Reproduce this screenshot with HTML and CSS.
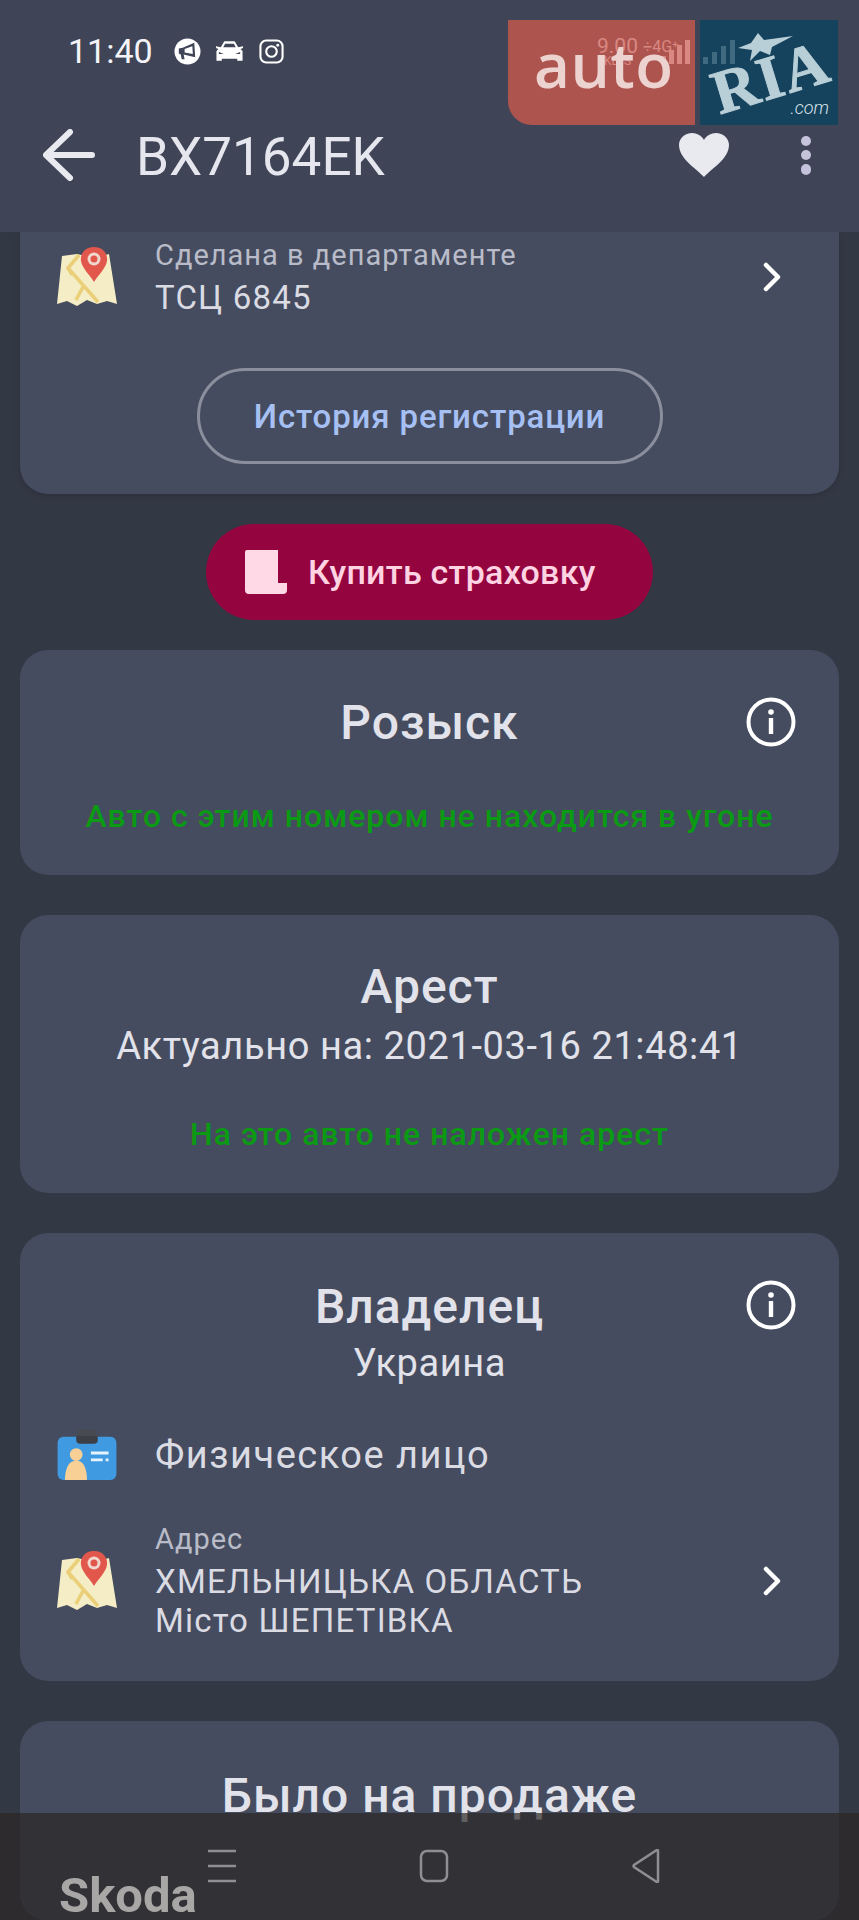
FILE: index.html
```html
<!DOCTYPE html>
<html lang="ru">
<head>
<meta charset="utf-8">
<title>BX7164EK</title>
<link rel="stylesheet" href="styles.css">
</head>
<body>
<svg class="defs" width="0" height="0" aria-hidden="true">
  <defs>
    <symbol id="map" viewBox="0 0 60 60">
      <path d="M5 9 L20 7 L38 11 L52 7 L60 57 L50 54 L40 57 L30 53 L20 59 L10 54 L0 57 Z" fill="#f5edc5"/>
      <path d="M22 8 L11 21 L41 55 M11 21 L15 28 M27 38 L19 53" fill="none" stroke="#ebcf78" stroke-width="3.500"/>
      <path d="M37 0 C27 0 23 8 24 14 C25 21 32 27 37 35 C42 27 49 21 50 14 C51 8 47 0 37 0 Z" fill="#e2574c"/>
      <circle cx="37" cy="12" r="6.500" fill="#f0d8cf"/>
      <circle cx="37" cy="12" r="3.500" fill="#e2574c"/>
    </symbol>
    <symbol id="chevron" viewBox="0 0 22 30">
      <path d="M5 3 L17 15 L5 27" fill="none" stroke="#fff" stroke-width="4.500" stroke-linecap="round" stroke-linejoin="round"/>
    </symbol>
    <symbol id="info" viewBox="0 0 50 50">
      <circle cx="25" cy="25" r="22.500" fill="none" stroke="#fff" stroke-width="4"/>
      <circle cx="25" cy="15" r="2.800" fill="#fff"/>
      <rect x="22.800" y="21" width="4.400" height="16" fill="#fff"/>
    </symbol>
  </defs>
</svg>

<header class="appbar">
  <div class="status">
    <span class="time">11:40</span>
    <svg class="st-icon mega" viewBox="0 0 28 28"><circle cx="14" cy="14" r="13.500" fill="#fff"/><path d="M5 11 L9 10 L21 5 L22 20 L10 17 L11 22 L8 22 L7 17 L5 16 Z" fill="#3f4456"/><path d="M11 11.500 L19 8.500 L19.500 16.500 L11 15 Z" fill="#fff"/></svg>
    <svg class="st-icon car" viewBox="0 0 30 22"><path d="M6 7 L9 2 C9.500 1 10 1 11 1 H19 C20 1 20.500 1 21 2 L24 7 L29 6 L29 8 L26.500 9 L28.500 11 V21 H23 V19 H7 V21 H1.500 V11 L3.500 9 L1 8 V6 Z" fill="#fff"/><path d="M8.500 7 L10.500 3.500 H19.500 L21.500 7 Z M4 12 L9 14 H4 Z M26 12 L21 14 H26 Z" fill="#3f4456"/></svg>
    <svg class="st-icon insta" viewBox="0 0 26 26"><rect x="1.500" y="1.500" width="23" height="23" rx="6" fill="none" stroke="#fff" stroke-width="2.200"/><circle cx="13" cy="13" r="5.500" fill="none" stroke="#fff" stroke-width="2.200"/><circle cx="19.500" cy="6.500" r="1.500" fill="#fff"/></svg>
  </div>
  <div class="toolbar">
    <svg class="back" viewBox="0 0 52 52"><path d="M3 26 H49 M27 3 L3 26 L27 49" fill="none" stroke="#e9e9f0" stroke-width="6" stroke-linecap="round" stroke-linejoin="round"/></svg>
    <h1 class="plate">BX7164EK</h1>
    <svg class="heart" viewBox="0 0 50 44"><path d="M25 44 C18 36 0 26 0 12 C0 5 6 0 13 0 C18 0 23 3 25 7 C27 3 32 0 37 0 C44 0 50 5 50 12 C50 26 32 36 25 44 Z" fill="#e9e9f0"/></svg>
    <div class="dots"><i></i><i></i><i></i></div>
  </div>
</header>

<main class="content">
  <section class="card first">
    <div class="row">
      <svg class="row-icon"><use href="#map"/></svg>
      <div class="row-text">
        <div class="label">Сделана в департаменте</div>
        <div class="value">ТСЦ 6845</div>
      </div>
      <svg class="chevron"><use href="#chevron"/></svg>
    </div>
    <a class="outline-btn">История регистрации</a>
  </section>

  <a class="buy">
    <svg class="buy-icon" viewBox="0 0 42 44"><path d="M2 0 H33 V33 H42 V40 Q42 44 38 44 H4 Q0 44 0 40 V2 Q0 0 2 0 Z" fill="#ffd9e6"/></svg>
    <span>Купить страховку</span>
  </a>

  <section class="card wanted">
    <h2 class="title">Розыск</h2>
    <svg class="info"><use href="#info"/></svg>
    <p class="ok">Авто с этим номером не находится в угоне</p>
  </section>

  <section class="card arrest">
    <h2 class="title">Арест</h2>
    <div class="sub">Актуально на: 2021-03-16 21:48:41</div>
    <p class="ok">На это авто не наложен арест</p>
  </section>

  <section class="card owner">
    <h2 class="title">Владелец</h2>
    <svg class="info"><use href="#info"/></svg>
    <div class="sub">Украина</div>
    <div class="row person">
      <svg class="row-icon" viewBox="0 0 60 51"><rect x="0" y="7" width="60" height="44" rx="6" fill="#3f9ae2"/><path d="M20 7 V3 Q20 0 24 0 H36 Q40 0 40 3 V7 Z" fill="#484a50"/><path d="M19 6 H41 V10 Q41 14 37 14 H23 Q19 14 19 10 Z" fill="#3d3f46"/><circle cx="19" cy="25" r="6.500" fill="#f8cf94"/><path d="M7.500 51 C7.500 40 11 31 19 31 C27 31 30 40 30 51 Z" fill="#f8cf94"/><path d="M34 22 H52 V25 H34 Z M34 29 H46 V32 H34 Z M49 29 H52 V32 H49 Z" fill="#e6f3fb"/></svg>
      <div class="row-text"><div class="value big">Физическое лицо</div></div>
    </div>
    <div class="row address">
      <svg class="row-icon"><use href="#map"/></svg>
      <div class="row-text">
        <div class="label">Адрес</div>
        <div class="value">ХМЕЛЬНИЦЬКА ОБЛАСТЬ</div>
        <div class="value">Місто ШЕПЕТІВКА</div>
      </div>
      <svg class="chevron"><use href="#chevron"/></svg>
    </div>
  </section>

  <section class="card sale">
    <h2 class="title">Было на продаже</h2>
    <div class="brand">Skoda</div>
  </section>
</main>

<nav class="navbar">
  <svg class="nav-icon" viewBox="0 0 30 34"><path d="M1 2 H29 M1 17 H29 M1 32 H29" fill="none" stroke="#8f8f92" stroke-width="2.500"/></svg>
  <svg class="nav-icon" viewBox="0 0 30 34"><rect x="2" y="2" width="26" height="30" rx="6" fill="none" stroke="#8f8f92" stroke-width="2.500"/></svg>
  <svg class="nav-icon" viewBox="0 0 30 34"><path d="M27 2 V32 Q27 34 25 32.500 L3 18 Q2 17 3 16 L25 1.500 Q27 0 27 2 Z" fill="none" stroke="#8f8f92" stroke-width="2.500"/></svg>
</nav>

<aside class="ad">
  <div class="ad-auto">
    <span class="ghost">9.00</span>
    <span class="ghost net">÷4G⁺</span>
    <span class="ghost kbs">KB/S</span>
    <svg class="bars" viewBox="0 0 30 24"><path d="M1 16 H6 V24 H1 Z M9 10 H14 V24 H9 Z M17 5 H22 V24 H17 Z M25 0 H30 V24 H25 Z" fill="#d98882"/></svg>
    <span class="auto-word">auto</span>
  </div>
  <div class="ad-ria">
    <svg class="bars" viewBox="0 0 34 24"><path d="M1 17 H6 V24 H1 Z M10 12 H15 V24 H10 Z M19 6 H24 V24 H19 Z M28 0 H33 V24 H28 Z" fill="#3f6a80"/></svg>
    <svg class="ad-star" viewBox="0 0 55 29"><path d="M20 0 L26 7 L55 3 L34 14 L32 22 L22 18 L12 28 L14 17 L0 15 L13 10 Z" fill="#b9cfd8"/></svg>
    <span class="ria">RIA</span>
    <span class="com">.com</span>
  </div>
</aside>
</body>
</html>
```
FILE: styles.css
```css
* { box-sizing: border-box; }
html, body { margin: 0; height: 1920px; overflow: hidden; }
body { background: #333845; font-family: Roboto, "Liberation Sans", sans-serif; color: #e6e6ee; position: relative; }
.defs { position: absolute; }

.appbar { height: 232px; background: #3f4456; padding: 34px 0 0 43px; position: relative; z-index: 2; }
.status { display: flex; align-items: center; height: 34px; padding-left: 25px; }
.time { font-size: 34px; color: #f4f4f8; width: 106px; flex: none; }
.st-icon { flex: none; }
.mega { width: 27px; height: 27px; margin-right: 14px; }
.car { width: 29px; height: 22px; margin-right: 15px; }
.insta { width: 25px; height: 25px; }
.toolbar { display: flex; align-items: center; height: 60px; margin-top: 57px; }
.back { width: 52px; height: 52px; flex: none; }
.plate { margin: 0 0 0 41px; padding-top: 4px; font-size: 53px; font-weight: 400; flex: 1; color: #e6e6ee; }
.heart { width: 50px; height: 44px; margin-right: 72px; flex: none; }
.dots { display: flex; flex-direction: column; gap: 3.750px; margin-right: 48px; }
.dots i { width: 10.500px; height: 10.500px; border-radius: 50%; background: #c5c2dc; }

.content { padding: 0 20px; display: flex; flex-direction: column; align-items: stretch; }
.card { background: #454c5f; border-radius: 28px; position: relative; flex: none; margin-bottom: 40px; }
.first { height: 262px; border-radius: 0 0 28px 28px; padding: 0 0 0 37px; margin-bottom: 30px; box-shadow: 0 2px 6px rgba(0,0,0,.15); display: flex; flex-direction: column; }
.first .row-text { padding-bottom: 4px; }
.row { display: flex; align-items: center; padding-right: 56px; }
.row-icon { width: 60px; height: 60px; flex: none; margin-right: 38px; }
.row-text { flex: 1; }
.label { font-size: 29px; line-height: 46px; color: #b9bcc8; letter-spacing: 1px; }
.value { font-size: 33px; line-height: 39px; color: #dadbe3; letter-spacing: 1.200px; }
.value.big { font-size: 38px; line-height: 50px; letter-spacing: 1.500px; }
.chevron { width: 22px; height: 30px; flex: none; }
.outline-btn { align-self: center; margin: 47px 0 0 -37px; width: 466px; height: 96px; border: 3px solid #8b8f9d; border-radius: 48px; display: flex; align-items: center; justify-content: center; font-size: 33px; font-weight: 500; color: #a7c0f4; letter-spacing: .850px; }

.buy { align-self: center; height: 96px; width: 447px; border-radius: 48px; background: #94053f; display: flex; align-items: center; padding-left: 39px; gap: 21px; margin-bottom: 30px; font-size: 34px; font-weight: 500; color: #ffd3e2; letter-spacing: .250px; flex: none; }
.buy-icon { width: 42px; height: 44px; }

.title { margin: 0; text-align: center; font-size: 48px; font-weight: 500; color: #e2e3ea; line-height: 52px; letter-spacing: 1px; }
.sub { text-align: center; font-size: 38px; line-height: 48px; color: #e2e3ea; letter-spacing: .6px; }
.ok { margin: 0; text-align: center; font-size: 32px; font-weight: 500; line-height: 40px; color: #0a9a14; letter-spacing: 1px; }
.info { width: 50px; height: 50px; position: absolute; top: 47px; right: 43px; }

.wanted { height: 225px; padding-top: 47px; }
.wanted .ok { margin-top: 47px; }
.arrest { height: 278px; padding-top: 46px; }
.arrest .sub { margin-top: 9px; }
.arrest .ok { margin-top: 44px; }
.owner { height: 448px; padding-top: 48px; }
.owner .sub { margin-top: 6px; }
.person { padding-left: 37px; margin-top: 43px; }
.person .row-icon { height: 50px; }
.address { padding-left: 37px; margin-top: 36px; }
.address .row-icon, .address .chevron { margin-top: 6px; }
.address .value:first-of-type { margin-top: 1px; }
.sale { height: 200px; padding-top: 49px; margin-bottom: 0; }
.brand { position: relative; z-index: 4; margin: 47px 0 0 39px; font-size: 49px; line-height: 54px; font-weight: 700; color: #a9a7a6; }

.navbar { position: absolute; left: 0; right: 0; top: 1813px; height: 107px; background: rgba(43,39,37,.7); display: flex; align-items: flex-start; padding: 36px 0 0 207px; gap: 182px; z-index: 3; }
.nav-icon { width: 30px; height: 34px; }

.ad { position: absolute; top: 20px; left: 508px; display: flex; gap: 5px; z-index: 5; height: 105px; }
.ad-auto { width: 187px; background: #ae544f; border-radius: 0 0 0 24px; position: relative; }
.auto-word { position: absolute; left: 26px; top: 0; color: #ecd3d0; font-family: "Open Sans", sans-serif; font-size: 62px; font-weight: 600; line-height: 88px; letter-spacing: .5px; }
.ghost { position: absolute; left: 89px; top: 15px; font-size: 21px; line-height: 22px; color: #d98882; white-space: nowrap; }
.ghost.net { left: 135px; top: 16px; font-size: 16px; }
.ghost.kbs { left: 96px; top: 34px; font-size: 12px; line-height: 14px; }
.bars { position: absolute; width: 30px; height: 24px; right: 5px; top: 20px; }
.ad-ria { width: 138px; background: #15425d; position: relative; }
.ad-ria .bars { left: 2px; right: auto; width: 34px; }
.ad-star { position: absolute; width: 55px; height: 29px; left: 38px; top: 13px; }
.ria { position: absolute; left: 11px; top: 22px; font-family: "Liberation Serif", serif; font-weight: 700; font-size: 62px; line-height: 70px; color: #b9cfd8; transform: rotate(-17deg); letter-spacing: 2px; -webkit-text-stroke: 1px #b9cfd8; }
.com { position: absolute; right: 9px; bottom: 7px; font-size: 18px; line-height: 20px; font-weight: 300; color: #d8e4ea; font-style: italic; }
```
